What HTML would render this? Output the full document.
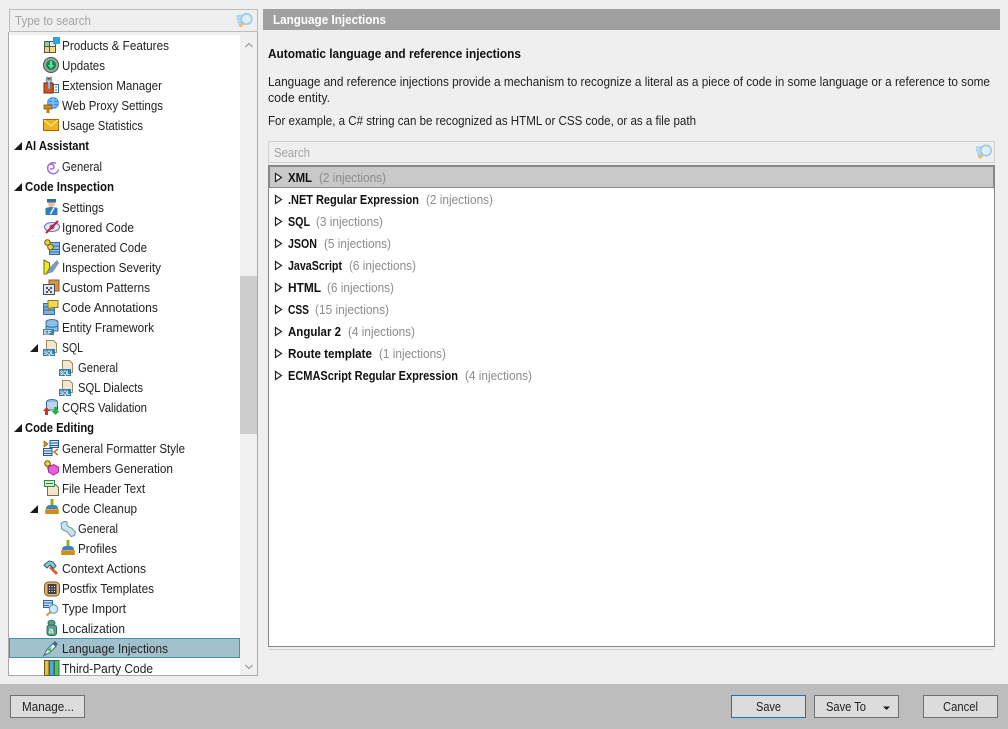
<!DOCTYPE html>
<html><head><meta charset="utf-8"><style>
html,body{margin:0;padding:0;width:1008px;height:729px;overflow:hidden;background:#efefef}
svg{display:block}
text{font-family:"Liberation Sans",sans-serif;font-size:12.5px;fill:#222}
.b{font-weight:bold;fill:#111}
.g{fill:#8c8c8c}
.p{fill:#a3a3a3}
</style></head><body>
<svg width="1008" height="729" viewBox="0 0 1008 729" xmlns="http://www.w3.org/2000/svg">
<defs>
<g id="sql"><path d="M3.500 .5h7l3 3v9h-10z" fill="#f3e6cd" stroke="#9c8a68"/><rect x="0" y="9" width="12" height="7" fill="#2f7fae"/><text x="1" y="15" style="font-size:6px;font-weight:bold;fill:#fff" textLength="10" lengthAdjust="spacingAndGlyphs">SQL</text></g>
<g id="broom"><rect x="6.500" y="0" width="3" height="7" fill="#8cb31c"/><path d="M2 10q0-4 4-4h4q4 0 4 4z" fill="#3f7fc8"/><rect x="1" y="10" width="14" height="5" fill="#e3a72d"/><path d="M3 11v4M5 11v4M7 11v4M9 11v4M11 11v4M13 11v4" stroke="#a97714"/></g>
<g id="ys"><circle cx="3.500" cy="3.500" r="2.800" fill="#ecd535" stroke="#6b5c10"/><circle cx="6.500" cy="8" r="2.800" fill="#ecd535" stroke="#6b5c10"/></g>
<path id="tri" d="M0 8L8 0V8Z" fill="#1a1a1a"/>
<path id="rt" d="M.5 .5L6.500 4.500L.5 8.500Z" fill="#fff" stroke="#222" stroke-width="1.200"/>
<g id="loupe"><path d="M0 3.500h7M0 6.500h5M1 9.500h4M2 12h3" stroke="#a6d9f0" stroke-width="2.500"/><path d="M3 14L7 10" stroke="#e8bd70" stroke-width="3.200"/><circle cx="10" cy="6.500" r="5.200" fill="#e2eef5" stroke="#a4cbe2" stroke-width="1.800"/></g>
</defs>

<rect width="1008" height="729" fill="#efefef"/>

<!-- tree -->
<rect x="8.500" y="32.500" width="249" height="643" fill="#fff" stroke="#a9a9a9"/>
<rect x="9" y="32" width="248" height="3" fill="#efefef"/>
<rect x="240" y="35" width="17" height="640" fill="#f0f0f0"/>
<rect x="240" y="276" width="17" height="158" fill="#cdcdcd"/>
<path d="M245.500 47L249 43.500L252.500 47" fill="none" stroke="#a0a0a0" stroke-width="1.300"/>
<path d="M245.500 665L249 668.500L252.500 665" fill="none" stroke="#a0a0a0" stroke-width="1.300"/>
<rect x="9.500" y="638.500" width="230" height="19" fill="#a3c1cc" stroke="#3f93b4"/>

<!-- left search -->
<rect x="9.500" y="9.500" width="248" height="22" fill="#efefef" stroke="#bcbcbc"/>
<text x="15" y="25" class="p" textLength="76" lengthAdjust="spacingAndGlyphs">Type to search</text>
<use href="#loupe" x="236.500" y="12.500"/>

<!-- arrows -->
<use href="#tri" x="14" y="142"/>
<use href="#tri" x="14" y="183"/>
<use href="#tri" x="14" y="424"/>
<use href="#tri" x="30" y="344"/>
<use href="#tri" x="30" y="505"/>

<!-- tree icons -->
<g transform="translate(44,37)"><rect x=".5" y="4.500" width="5" height="5" fill="#86d3a0" stroke="#555"/><rect x=".5" y="9.500" width="5" height="6" fill="#f6c98d" stroke="#555"/><rect x="5.500" y="9.500" width="6" height="6" fill="#f1e07e" stroke="#555"/><rect x="5.500" y="4.500" width="6" height="5" fill="#d8eef0" stroke="#555"/><rect x="9" y="0" width="7" height="7" fill="#27a6e5"/></g>
<g transform="translate(43,57)"><circle cx="8" cy="8" r="7.500" fill="#9aa89e" stroke="#3c5a48"/><circle cx="8" cy="8" r="5" fill="#1f7f57"/><path d="M6.800 4h2.400v4h2L8 11.500 4.800 8h2z" fill="#4cf08a"/></g>
<g transform="translate(43,77)"><path d="M1 6h3V1h4v5h2v10H1z" fill="#d9521c" stroke="#7b2b0b"/><path d="M4 0l1 3h2l1-3 1 3-2 3v6H5V6L3 3z" fill="#b5d5ea" stroke="#4a7ea3" stroke-width=".7"/><rect x="10.500" y="7.500" width="5" height="8" fill="#fff" stroke="#2f6d9f"/><path d="M12 10h2M12 13h2" stroke="#2f6d9f"/></g>
<g transform="translate(43,97)"><circle cx="10" cy="6" r="6" fill="#3b97ea"/><path d="M4.500 6h11M10 0v12M6 3h8M6 9h8" stroke="#bfe2fb" stroke-width=".7"/><rect x="1" y="8" width="8" height="4" fill="#d68a1a" stroke="#6e4308" stroke-width=".7"/><rect x="3.500" y="12" width="3" height="4" fill="#c07612"/></g>
<g transform="translate(43,119)"><rect x=".5" y=".5" width="15" height="11" fill="#f2b21b" stroke="#a66a00"/><path d="M1 1l7 6 7-6" fill="none" stroke="#fff2a8"/></g>
<path d="M56 163.500a5.500 5.500 0 1 0 2.500 6M47.500 167a3.500 3.500 0 0 1 6.500-1a2.500 2.500 0 0 1-4 2.500" fill="none" stroke="#a46fe0" stroke-width="1.500"/>
<g transform="translate(44,199)"><circle cx="7.500" cy="5" r="3.500" fill="#f0c090"/><path d="M3 0h9v3.500H3z" fill="#2b6fb0"/><path d="M1.500 9q6-2 12 0v7h-12z" fill="#2f7fc2"/><path d="M10 8.500L6.500 15" stroke="#fff" stroke-width="1.400"/></g>
<g transform="translate(44,219)"><ellipse cx="8" cy="8" rx="7.500" ry="4.500" fill="#e3e9f6" stroke="#5e66b5"/><circle cx="8" cy="8" r="2.500" fill="#5a6fc2"/><path d="M2 14L14 2" stroke="#d41e2c" stroke-width="2.200"/></g>
<g transform="translate(44,239)"><rect x="5.500" y="3.500" width="10" height="12" fill="#8ebbe3" stroke="#2f6ca8"/><path d="M6 7h9M6 10.500h9M6 13h9" stroke="#2f6ca8"/><use href="#ys"/></g>
<g transform="translate(43,259)"><path d="M1 1l5.500 3v5l-3 6H1z" fill="#f3ea1e" stroke="#6d6a10"/><path d="M4 15l3-7 7-7 2 3-6 9z" fill="#7f9ab8"/></g>
<g transform="translate(43,279)"><rect x="6" y="1" width="10" height="11" fill="#d9914e" stroke="#8c5a2c"/><rect x=".5" y="5.500" width="11" height="10" fill="#dde6ef" stroke="#4f4f4f"/><path d="M3 8h2v2H3zM7 8h2v2H7zM5 10h2v2H5zM3 12h2v2H3zM7 12h2v2H7z" fill="#556"/></g>
<g transform="translate(43,299)"><rect x=".5" y="4.500" width="11" height="11" fill="#7fb1df" stroke="#2f6ca8"/><path d="M1 8h10M1 11h10" stroke="#2f6ca8"/><path d="M5 1.500h10v7H9l-3 3v-3H5z" fill="#f3d84e" stroke="#8d7a20"/></g>
<g transform="translate(43,319)"><ellipse cx="9" cy="3" rx="6" ry="2.500" fill="#8cc0e6" stroke="#2d6f9e"/><path d="M3 3v9h12V3" fill="#8cc0e6" stroke="#2d6f9e"/><path d="M3 7q6 2.500 12 0" fill="none" stroke="#2d6f9e"/><rect x="0" y="10" width="11" height="6" fill="#3a7fac"/><text x="1" y="15.500" style="font-size:6px;font-weight:bold;fill:#fff">EF</text></g>
<use href="#sql" x="43" y="340"/>
<use href="#sql" x="59" y="360"/>
<use href="#sql" x="59" y="380"/>
<g transform="translate(43,399)"><ellipse cx="9" cy="3" rx="5.500" ry="2.500" fill="#8cc0e6" stroke="#2d6f9e"/><path d="M3.500 3v8h11V3" fill="#b9d6ee" stroke="#2d6f9e"/><path d="M0 12l3.500-4 3.500 4H5v4H2v-4z" fill="#d22e2e"/><path d="M8.500 12h2.500V8h3v4h2.500l-4 4z" fill="#1fb341"/></g>
<g transform="translate(43,440)"><path d="M1 1l4 3-4 3z" fill="#d9922a" stroke="#7a4e10" stroke-width=".6"/><rect x="7" y=".5" width="8.500" height="7" fill="#dbe8f5" stroke="#1f5d9e"/><path d="M7 3h8M7 5.500h8" stroke="#1f5d9e"/><rect x=".5" y="8.500" width="8.500" height="7" fill="#dbe8f5" stroke="#1f5d9e"/><path d="M1 11h8M1 13.500h8" stroke="#1f5d9e"/><path d="M15 9l-4 3 4 3" fill="none" stroke="#c4761c" stroke-width="1.500"/></g>
<g transform="translate(44,460)"><use href="#ys"/><path d="M9.500 4.500l5 2.500v5l-5 3-5-3V7z" fill="#e85fd8" stroke="#a230a0"/></g>
<g transform="translate(44,480)"><path d="M3.500 4.500h8l3 3v8h-11z" fill="#f3e6cd" stroke="#7d6c4c"/><rect x=".5" y=".5" width="10" height="6" fill="#d5ecd2" stroke="#2f8a3f"/><path d="M2 3.500h7" stroke="#2f8a3f"/></g>
<use href="#broom" x="44" y="499"/>
<g transform="translate(60,521)"><path d="M1 2.500q3-3 6-1.500v3l2 2 2.500 1 4 4-1 3.500-3.500 1-4-5-3-1-2.500-2z" fill="#c8e3ea" stroke="#5d9aa8"/></g>
<use href="#broom" x="60" y="540"/>
<g transform="translate(43,560)"><path d="M7 7l7 7" stroke="#e2602a" stroke-width="3"/><path d="M1 5l5-4 4 1 3 4-2.500 2.500-3.500-3.500-3 3z" fill="#8ec6d6" stroke="#33606e"/></g>
<g transform="translate(44,581)"><rect x=".5" y="1" width="15" height="14" rx="4" fill="#e0b873" stroke="#80581e"/><rect x="3.500" y="3" width="9" height="10" fill="#3f3f4a"/><path d="M5 5h1v1H5zM7.500 5h1v1h-1zM10 5h1v1h-1zM5 7.500h1v1H5zM7.500 7.500h1v1h-1zM10 7.500h1v1h-1zM5 10h1v1H5zM7.500 10h1v1h-1zM10 10h1v1h-1z" fill="#fff"/></g>
<g transform="translate(43,600)"><rect x=".5" y=".5" width="9" height="7" fill="#c7dcf0" stroke="#2d6ca8"/><path d="M1 3h8M1 5.500h5" stroke="#2d6ca8"/><path d="M7.500 12L3.500 15.500" stroke="#d9a24a" stroke-width="2.200"/><circle cx="10.500" cy="9" r="4.200" fill="#cfeafa" stroke="#5a8fb2"/></g>
<g transform="translate(46,620)"><ellipse cx="5.500" cy="2.800" rx="3.500" ry="2.500" fill="#58a08e" stroke="#2f6a5c"/><rect x="1" y="5" width="9.500" height="10.500" rx="2.500" fill="#58a08e" stroke="#2f6a5c"/><text x="2.500" y="13.500" style="font-size:9px;font-weight:bold;fill:#e3f4ef">a</text></g>
<g transform="translate(43,640)"><path d="M1 15.500l3-6 6-6 3 3-6 6z" fill="#f1f7f9" stroke="#3f6c85"/><path d="M5 10l3-2-1 3z" fill="#2cc84a" stroke="#2cc84a"/><path d="M10 3l2-2 3 3-2 2z" fill="#3f6c85"/></g>
<g transform="translate(44,660)"><rect x=".5" y=".5" width="4.500" height="15" fill="#e3be4d" stroke="#6f5a18"/><rect x="5.500" y=".5" width="4.500" height="15" fill="#55a7e0" stroke="#24628f"/><rect x="10.500" y=".5" width="4.500" height="15" fill="#5cbd6b" stroke="#2c7a3b"/></g>

<!-- tree text -->
<text x="62" y="50" textLength="107" lengthAdjust="spacingAndGlyphs">Products &amp; Features</text>
<text x="62" y="70" textLength="43" lengthAdjust="spacingAndGlyphs">Updates</text>
<text x="62" y="90" textLength="100" lengthAdjust="spacingAndGlyphs">Extension Manager</text>
<text x="62" y="110" textLength="101" lengthAdjust="spacingAndGlyphs">Web Proxy Settings</text>
<text x="62" y="130" textLength="81" lengthAdjust="spacingAndGlyphs">Usage Statistics</text>
<text x="25" y="150" class="b" textLength="64" lengthAdjust="spacingAndGlyphs">AI Assistant</text>
<text x="62" y="171" textLength="40" lengthAdjust="spacingAndGlyphs">General</text>
<text x="25" y="191" class="b" textLength="89" lengthAdjust="spacingAndGlyphs">Code Inspection</text>
<text x="62" y="212" textLength="42" lengthAdjust="spacingAndGlyphs">Settings</text>
<text x="62" y="232" textLength="72" lengthAdjust="spacingAndGlyphs">Ignored Code</text>
<text x="62" y="252" textLength="85" lengthAdjust="spacingAndGlyphs">Generated Code</text>
<text x="62" y="272" textLength="99" lengthAdjust="spacingAndGlyphs">Inspection Severity</text>
<text x="62" y="292" textLength="88" lengthAdjust="spacingAndGlyphs">Custom Patterns</text>
<text x="62" y="312" textLength="96" lengthAdjust="spacingAndGlyphs">Code Annotations</text>
<text x="62" y="332" textLength="92" lengthAdjust="spacingAndGlyphs">Entity Framework</text>
<text x="62" y="352" textLength="21" lengthAdjust="spacingAndGlyphs">SQL</text>
<text x="78" y="372" textLength="40" lengthAdjust="spacingAndGlyphs">General</text>
<text x="78" y="392" textLength="65" lengthAdjust="spacingAndGlyphs">SQL Dialects</text>
<text x="62" y="412" textLength="85" lengthAdjust="spacingAndGlyphs">CQRS Validation</text>
<text x="25" y="432" class="b" textLength="69" lengthAdjust="spacingAndGlyphs">Code Editing</text>
<text x="62" y="453" textLength="123" lengthAdjust="spacingAndGlyphs">General Formatter Style</text>
<text x="62" y="473" textLength="111" lengthAdjust="spacingAndGlyphs">Members Generation</text>
<text x="62" y="493" textLength="83" lengthAdjust="spacingAndGlyphs">File Header Text</text>
<text x="62" y="513" textLength="75" lengthAdjust="spacingAndGlyphs">Code Cleanup</text>
<text x="78" y="533" textLength="40" lengthAdjust="spacingAndGlyphs">General</text>
<text x="78" y="553" textLength="39" lengthAdjust="spacingAndGlyphs">Profiles</text>
<text x="62" y="573" textLength="84" lengthAdjust="spacingAndGlyphs">Context Actions</text>
<text x="62" y="593" textLength="92" lengthAdjust="spacingAndGlyphs">Postfix Templates</text>
<text x="62" y="613" textLength="64" lengthAdjust="spacingAndGlyphs">Type Import</text>
<text x="62" y="633" textLength="63" lengthAdjust="spacingAndGlyphs">Localization</text>
<text x="62" y="653" textLength="106" lengthAdjust="spacingAndGlyphs">Language Injections</text>
<text x="62" y="673" textLength="91" lengthAdjust="spacingAndGlyphs">Third-Party Code</text>

<!-- right header -->
<rect x="263" y="9" width="737" height="21" fill="#a0a0a0"/>
<text x="273" y="24" class="b" style="fill:#fff" textLength="113" lengthAdjust="spacingAndGlyphs">Language Injections</text>
<text x="268" y="58" class="b" textLength="253" lengthAdjust="spacingAndGlyphs">Automatic language and reference injections</text>
<text x="268" y="86" textLength="722" lengthAdjust="spacingAndGlyphs">Language and reference injections provide a mechanism to recognize a literal as a piece of code in some language or a reference to some</text>
<text x="268" y="102" textLength="62" lengthAdjust="spacingAndGlyphs">code entity.</text>
<text x="268" y="125" textLength="428" lengthAdjust="spacingAndGlyphs">For example, a C# string can be recognized as HTML or CSS code, or as a file path</text>

<!-- list search -->
<rect x="268.500" y="141.500" width="726" height="21" fill="#efefef" stroke="#d0d0d0"/>
<text x="274" y="157" class="p" textLength="36" lengthAdjust="spacingAndGlyphs">Search</text>
<use href="#loupe" x="976" y="144"/>

<!-- list -->
<rect x="268.500" y="165.500" width="726" height="481" fill="#fff" stroke="#858585"/>
<rect x="269.500" y="166.500" width="724" height="21" fill="#c9c9c9" stroke="#8a8a8a"/>
<path d="M269 649.500H993" stroke="#cfcfcf"/>

<use href="#rt" x="275" y="173"/>
<use href="#rt" x="275" y="195"/>
<use href="#rt" x="275" y="217"/>
<use href="#rt" x="275" y="239"/>
<use href="#rt" x="275" y="261"/>
<use href="#rt" x="275" y="283"/>
<use href="#rt" x="275" y="305"/>
<use href="#rt" x="275" y="327"/>
<use href="#rt" x="275" y="349"/>
<use href="#rt" x="275" y="371"/>

<text x="288" y="182" class="b" textLength="24" lengthAdjust="spacingAndGlyphs">XML</text><text x="319" y="182" class="g" textLength="67" lengthAdjust="spacingAndGlyphs">(2 injections)</text>
<text x="288" y="204" class="b" textLength="131" lengthAdjust="spacingAndGlyphs">.NET Regular Expression</text><text x="426" y="204" class="g" textLength="67" lengthAdjust="spacingAndGlyphs">(2 injections)</text>
<text x="288" y="226" class="b" textLength="22" lengthAdjust="spacingAndGlyphs">SQL</text><text x="316" y="226" class="g" textLength="67" lengthAdjust="spacingAndGlyphs">(3 injections)</text>
<text x="288" y="248" class="b" textLength="29" lengthAdjust="spacingAndGlyphs">JSON</text><text x="324" y="248" class="g" textLength="67" lengthAdjust="spacingAndGlyphs">(5 injections)</text>
<text x="288" y="270" class="b" textLength="54" lengthAdjust="spacingAndGlyphs">JavaScript</text><text x="349" y="270" class="g" textLength="67" lengthAdjust="spacingAndGlyphs">(6 injections)</text>
<text x="288" y="292" class="b" textLength="33" lengthAdjust="spacingAndGlyphs">HTML</text><text x="327" y="292" class="g" textLength="67" lengthAdjust="spacingAndGlyphs">(6 injections)</text>
<text x="288" y="314" class="b" textLength="21" lengthAdjust="spacingAndGlyphs">CSS</text><text x="315" y="314" class="g" textLength="74" lengthAdjust="spacingAndGlyphs">(15 injections)</text>
<text x="288" y="336" class="b" textLength="53" lengthAdjust="spacingAndGlyphs">Angular 2</text><text x="348" y="336" class="g" textLength="67" lengthAdjust="spacingAndGlyphs">(4 injections)</text>
<text x="288" y="358" class="b" textLength="84" lengthAdjust="spacingAndGlyphs">Route template</text><text x="379" y="358" class="g" textLength="67" lengthAdjust="spacingAndGlyphs">(1 injections)</text>
<text x="288" y="380" class="b" textLength="170" lengthAdjust="spacingAndGlyphs">ECMAScript Regular Expression</text><text x="465" y="380" class="g" textLength="67" lengthAdjust="spacingAndGlyphs">(4 injections)</text>

<!-- footer -->
<rect x="0" y="684" width="1008" height="45" fill="#bdbdbd"/>
<rect x="10.500" y="695.500" width="74" height="22" fill="#dcdcdc" stroke="#707070"/>
<text x="22" y="711" textLength="52" lengthAdjust="spacingAndGlyphs">Manage...</text>
<rect x="731.500" y="695.500" width="74" height="22" fill="#dcdcdc" stroke="#0a78d0"/>
<text x="756" y="711" textLength="25" lengthAdjust="spacingAndGlyphs">Save</text>
<rect x="814.500" y="695.500" width="84" height="22" fill="#dcdcdc" stroke="#707070"/>
<text x="826" y="711" textLength="40" lengthAdjust="spacingAndGlyphs">Save To</text>
<path d="M883 706.500h7l-3.500 3.500z" fill="#1a1a1a"/>
<rect x="923.500" y="695.500" width="74" height="22" fill="#dcdcdc" stroke="#707070"/>
<text x="943" y="711" textLength="35" lengthAdjust="spacingAndGlyphs">Cancel</text>
</svg>
</body></html>
